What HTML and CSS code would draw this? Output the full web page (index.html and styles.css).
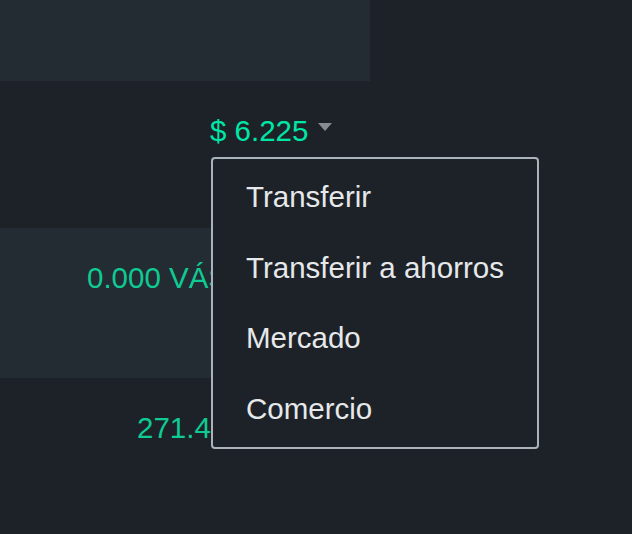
FILE: index.html
```html
<!DOCTYPE html>
<html lang="es">
<head>
    <meta charset="UTF-8">
    <meta name="viewport" content="width=device-width, initial-scale=1.0">
    <title>Billetera</title>
    <link rel="stylesheet" href="styles.css">
</head>
<body>

    <!-- Wallet rows -->
    <div class="wallet">
        <div class="row row-top shade"></div>

        <div class="row row-dollars">
            <div class="amount">
                <span class="value bright">$ 6.225</span><span class="caret"></span>

                <!-- Dropdown menu -->
                <ul class="menu">
                    <li><a href="#">Transferir</a></li>
                    <li><a href="#">Transferir a ahorros</a></li>
                    <li><a href="#">Mercado</a></li>
                    <li><a href="#">Comercio</a></li>
                </ul>
            </div>
        </div>

        <div class="row row-savings shade">
            <span class="value">0.000 VÁS</span>
        </div>

        <div class="row row-total">
            <span class="value">271.458</span>
        </div>
    </div>

</body>
</html>
```

FILE: styles.css
```css
* {
    margin: 0;
    padding: 0;
    box-sizing: border-box;
}

body {
    font-family: "Liberation Sans", Arial, sans-serif;
    font-size: 29.5px;
    background-color: #1c2228;
    overflow: hidden;
}

.wallet {
    width: 370px;
}

.row {
    padding-top: 33px;
    line-height: 33px;
    white-space: nowrap;
}

.shade {
    background-color: #232c32;
}

.row-top {
    height: 81px;
}

.row-dollars {
    height: 147px;
    padding-left: 210px;
}

.row-savings {
    height: 150px;
    padding-left: 87px;
}

.row-total {
    height: 160px;
    padding-left: 137px;
}

.value {
    color: #0fca93;
}

.value.bright {
    color: #00e6a6;
}

.amount {
    position: relative;
    display: inline-block;
}

.caret {
    display: inline-block;
    margin-left: 10px;
    width: 0;
    height: 0;
    border-left: 7px solid transparent;
    border-right: 7px solid transparent;
    border-top: 8px solid #868c91;
    vertical-align: 10px;
}

.menu {
    position: absolute;
    top: calc(100% + 10px);
    left: 1px;
    z-index: 10;
    width: 328px;
    list-style-type: none;
    padding: 3px 0;
    background-color: #1c2228;
    border: 2px solid #a9b3b9;
    border-radius: 4px;
}

.menu li {
    line-height: 70.5px;
}

.menu li a {
    display: block;
    padding: 0 33px;
    color: #e6e8ea;
    text-decoration: none;
}
```
